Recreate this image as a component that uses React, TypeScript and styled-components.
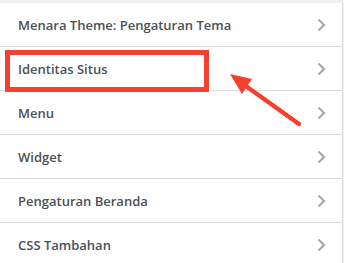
import React from "react";
import styled, { createGlobalStyle } from "styled-components";

const GlobalStyle = createGlobalStyle`
	html, body {
		margin: 0;
		padding: 0;
		background: #ffffff;
	}
	* {
		box-sizing: border-box;
	}
`;

const Panel = styled.div`
	position: relative;
	width: 344px;
	height: 263px;
	overflow: hidden;
	background: #f0f0f1;
	padding-top: 3px;
	font-family: "Open Sans", "Noto Sans", sans-serif;
`;

const List = styled.ul`
	list-style: none;
	margin: 0;
	padding: 0;
	width: 343px;
	background: #ffffff;
	border-right: 1px solid #dcdcde;
`;

const Item = styled.li`
	display: flex;
	align-items: center;
	justify-content: space-between;
	height: 44px;
	padding: 0 16px 0 18px;
	border-bottom: 1px solid #dcdcde;
	color: #4a5157;
	font-size: 13px;
	font-weight: 600;
	line-height: 20px;
	cursor: pointer;
`;

const Chevron = styled.svg`
	width: 10px;
	height: 16px;
	flex-shrink: 0;
`;

const Highlight = styled.div`
	position: absolute;
	left: 5px;
	top: 50px;
	width: 204px;
	height: 42px;
	border: 5px solid #f5402f;
	pointer-events: none;
`;

const Arrow = styled.svg`
	position: absolute;
	left: 0;
	top: 0;
	width: 344px;
	height: 263px;
	pointer-events: none;
`;

const items = [
	"Menara Theme: Pengaturan Tema",
	"Identitas Situs",
	"Menu",
	"Widget",
	"Pengaturan Beranda",
	"CSS Tambahan",
];

const ChevronIcon: React.FC = () => (
	<Chevron viewBox="0 0 10 16">
		<polyline
			points="2.5,2.5 8,8 2.5,13.5"
			fill="none"
			stroke="#a7aaad"
			strokeWidth="2.2"
		/>
	</Chevron>
);

const App: React.FC = () => {
	return (
		<Panel>
			<GlobalStyle />
			<List>
				{items.map((label) => (
					<Item key={label}>
						<span>{label}</span>
						<ChevronIcon />
					</Item>
				))}
			</List>
			<Highlight />
			<Arrow viewBox="0 0 344 263">
				<line
					x1="299"
					y1="124"
					x2="243"
					y2="84"
					stroke="#f5402f"
					strokeWidth="4.5"
					strokeLinecap="round"
				/>
				<polygon points="230,74 252,79 242,94" fill="#f5402f" />
			</Arrow>
		</Panel>
	);
};

export default App;
